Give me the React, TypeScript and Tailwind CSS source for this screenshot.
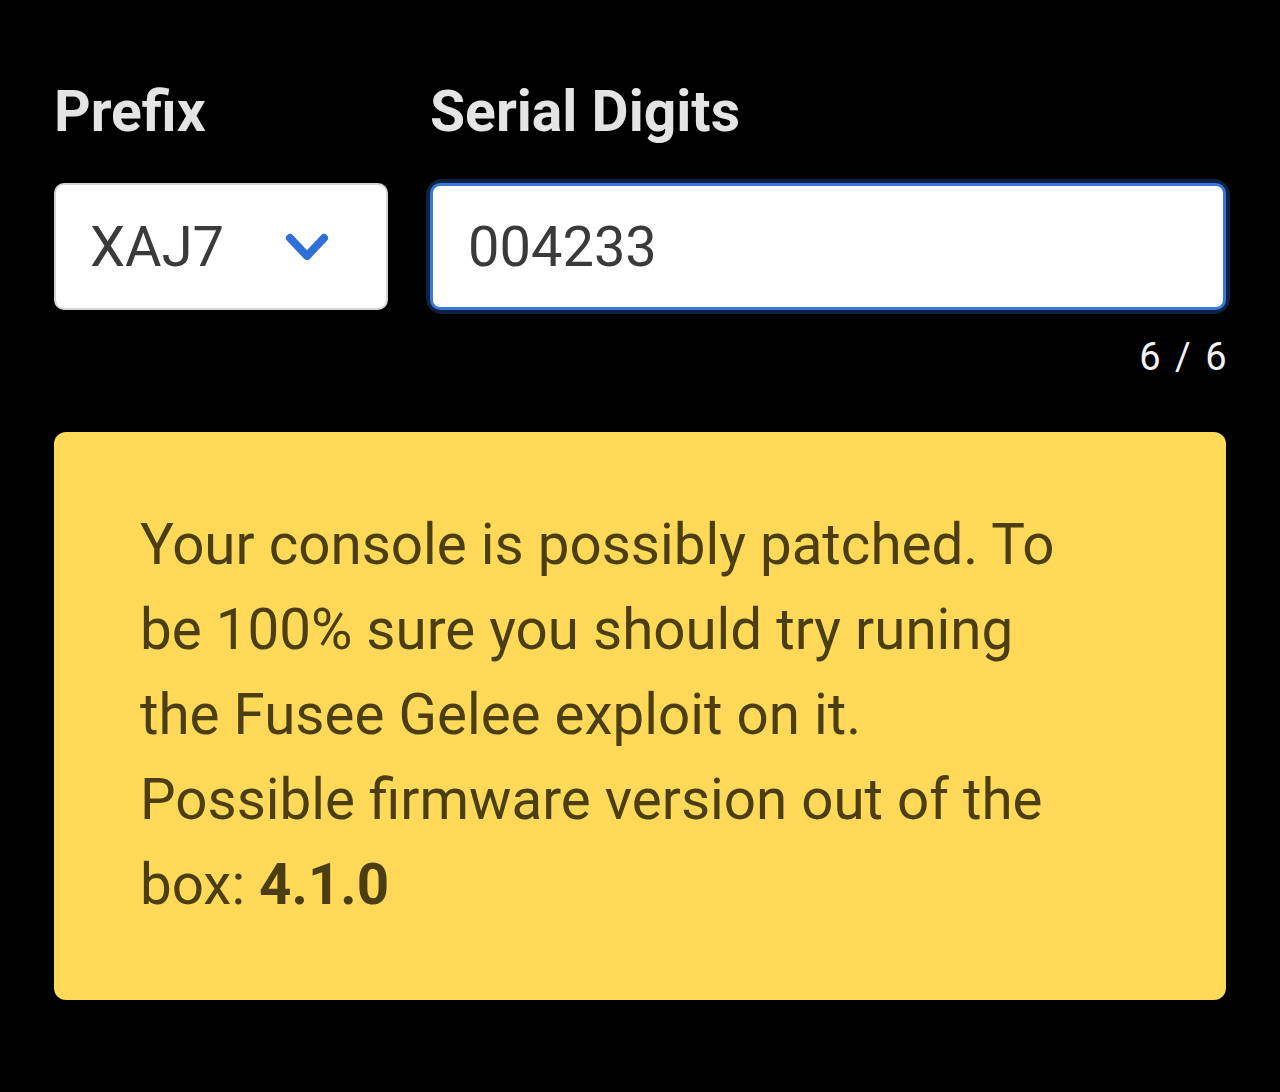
import { useState } from "react";

function Chevron() {
  return (
    <svg width="46" height="32" viewBox="0 0 46 32" fill="none">
      <polyline
        points="6,6 23,24 40,6"
        stroke="#2f6fd8"
        strokeWidth="8"
        strokeLinecap="round"
        strokeLinejoin="round"
      />
    </svg>
  );
}

export default function App() {
  const [serial, setSerial] = useState("004233");

  return (
    <div className="min-h-[1092px] w-[1280px] bg-black font-['Roboto',sans-serif]">
      <div className="px-[54px] pt-[83px]">
        <div className="flex gap-[42px]">
          <div className="flex w-[334px] flex-col">
            <label className="text-[57px] font-bold leading-none text-[#e4e4e4]">Prefix</label>
            <button
              type="button"
              className="mt-[43px] flex h-[127px] items-center rounded-[10px] border-2 border-[#d4d4d4] bg-white pl-[34px] text-[56px] text-[#3a3a3a]"
            >
              <span>XAJ7</span>
              <span className="ml-[60px] mt-[2px]">
                <Chevron />
              </span>
            </button>
          </div>
          <div className="flex flex-1 flex-col">
            <label className="text-[57px] font-bold leading-none text-[#e4e4e4]">Serial Digits</label>
            <div className="mt-[43px] rounded-[12px] ring-4 ring-[#0e2242]">
              <input
                value={serial}
                maxLength={6}
                onChange={(e) => setSerial(e.target.value)}
                className="block h-[127px] w-full rounded-[10px] border-[3px] border-[#3a78dc] bg-white px-[35px] text-[56px] text-[#3a3a3a] outline-none"
              />
            </div>
            <div className="-mr-[3px] mt-[28px] text-right text-[38px] leading-none tracking-[2.5px] text-[#f2f2f2]">
              {serial.length} / 6
            </div>
          </div>
        </div>

        <div className="mt-[56px] rounded-[12px] bg-[#ffd957] pb-[72px] pl-[86px] pr-[140px] pt-[71px]">
          <p className="text-[56.5px] leading-[85px] text-[#4a3e12]">
            Your console is possibly patched. To be 100% sure you should try runing the Fusee Gelee
            exploit on it.
            <br />
            Possible firmware version out of the box: <b className="font-bold">4.1.0</b>
          </p>
        </div>
      </div>
    </div>
  );
}
